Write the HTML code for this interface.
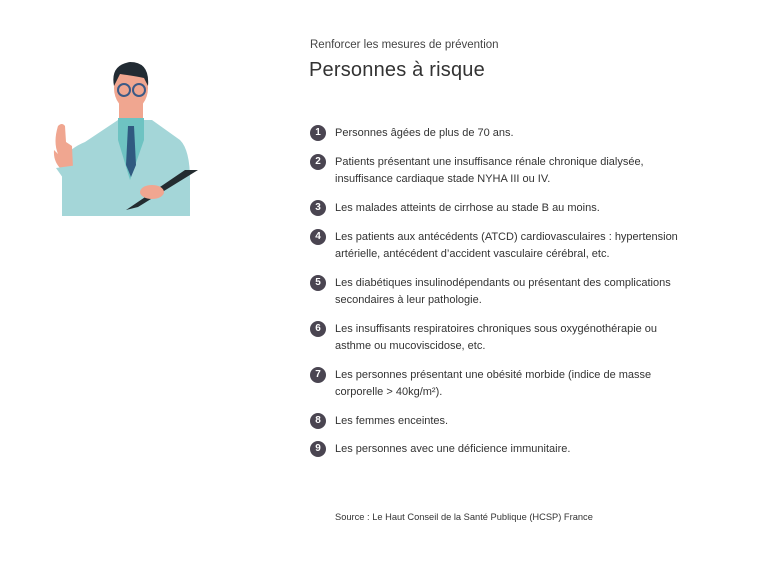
<!DOCTYPE html>
<html><head><meta charset="utf-8"><style>
body{margin:0;width:768px;height:582px;background:#fff;font-family:"Liberation Sans",sans-serif;color:#3a3a3a;position:relative;overflow:hidden}
.sub{position:absolute;left:310px;top:39px;font-size:11.5px;color:#444}
h1{position:absolute;left:309px;top:59px;margin:0;font-weight:normal;font-size:20px;color:#333;letter-spacing:0.2px}
.it{position:absolute;left:310px;width:380px;font-size:11px;line-height:17px;color:#333}
.it b{position:absolute;left:0;top:0;width:16px;height:16px;border-radius:50%;background:#4a4551;color:#fff;font-size:10px;line-height:16px;text-align:center;font-weight:bold}
.it span{display:block;margin-left:25px}
.src{position:absolute;left:335px;top:512px;font-size:9.3px;color:#333}
</style></head><body>
<svg style="position:absolute;left:40px;top:50px" width="170" height="170" viewBox="0 0 170 170">
<path d="M22 166 L22 110 Q30 98 45 92 L78 70 L112 70 L140 90 Q150 100 150 130 L150 166 Z" fill="#a4d6d8"/>
<path d="M18 104 Q13 92 18 76 Q22 72 25 76 L26 92 L32 96 L33 118 L22 120 Q13 112 14 100Z" fill="#f0a690"/>
<path d="M16 118 L38 115 L50 140 L40 152 Z" fill="#a4d6d8"/>
<rect x="79" y="50" width="24" height="26" fill="#f0a690"/>
<path d="M78 68 L104 68 L104 90 L90 130 L78 90 Z" fill="#6ec3c2"/>
<path d="M88 76 L94 76 L96 115 L91 127 L86 115 Z" fill="#305a80"/>
<ellipse cx="91" cy="38" rx="17" ry="22" fill="#f0a690"/>
<path d="M74 36 Q70 15 90 12 Q110 12 108 36 L104 28 Q95 26 80 24 Z" fill="#222b33"/>
<circle cx="84" cy="40" r="6" fill="none" stroke="#3c5a86" stroke-width="2"/>
<circle cx="99" cy="40" r="6" fill="none" stroke="#3c5a86" stroke-width="2"/>
<path d="M86 160 L145 120 L158 120 L98 157 Z" fill="#232c30"/>
<ellipse cx="112" cy="142" rx="12" ry="7" fill="#f0a690"/>
</svg>
<div class="sub">Renforcer les mesures de prévention</div>
<h1>Personnes à risque</h1>
<div class="it" style="top:125px"><b>1</b><span>Personnes âgées de plus de 70 ans.</span></div>
<div class="it" style="top:154px"><b>2</b><span>Patients présentant une insuffisance rénale chronique dialysée, insuffisance cardiaque stade NYHA III ou IV.</span></div>
<div class="it" style="top:200px"><b>3</b><span>Les malades atteints de cirrhose au stade B au moins.</span></div>
<div class="it" style="top:229px"><b>4</b><span>Les patients aux antécédents (ATCD) cardiovasculaires : hypertension artérielle, antécédent d’accident vasculaire cérébral, etc.</span></div>
<div class="it" style="top:275px"><b>5</b><span>Les diabétiques insulinodépendants ou présentant des complications secondaires à leur pathologie.</span></div>
<div class="it" style="top:321px"><b>6</b><span>Les insuffisants respiratoires chroniques sous oxygénothérapie ou asthme ou mucoviscidose, etc.</span></div>
<div class="it" style="top:367px"><b>7</b><span>Les personnes présentant une obésité morbide (indice de masse corporelle &gt; 40kg/m²).</span></div>
<div class="it" style="top:413px"><b>8</b><span>Les femmes enceintes.</span></div>
<div class="it" style="top:441px"><b>9</b><span>Les personnes avec une déficience immunitaire.</span></div>
<div class="src">Source : Le Haut Conseil de la Santé Publique (HCSP) France</div>
</body></html>
